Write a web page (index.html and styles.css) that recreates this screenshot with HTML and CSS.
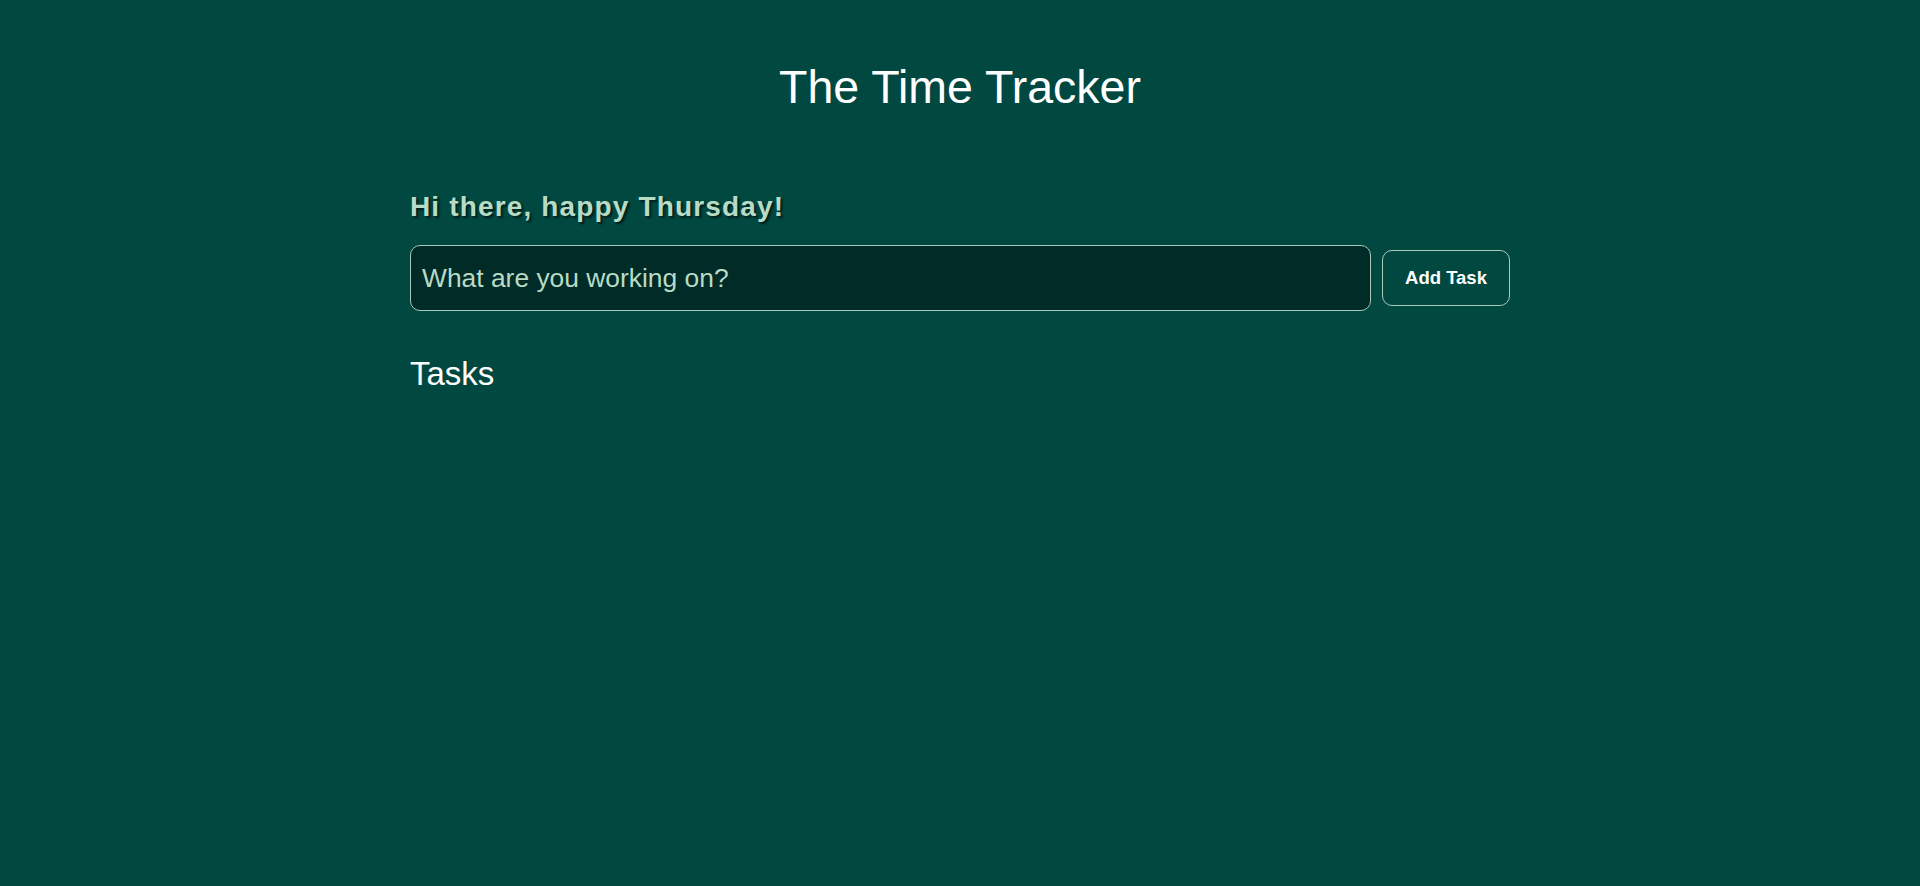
FILE: index.html
```html
<!DOCTYPE html>
<html lang="en">
<head>
<meta charset="utf-8">
<title>The Time Tracker</title>
<link rel="stylesheet" href="styles.css">
</head>
<body>
  <main class="app">
    <h1 class="title">The Time Tracker</h1>
    <section class="content">
      <h2 class="greeting">Hi there, happy Thursday!</h2>
      <form class="task-form" onsubmit="return false;">
        <input class="task-input" type="text" placeholder="What are you working on?">
        <button class="add-btn" type="submit">Add Task</button>
      </form>
      <h2 class="tasks-heading">Tasks</h2>
    </section>
  </main>
</body>
</html>
```

FILE: styles.css
```css
* { box-sizing: border-box; }

html, body {
  margin: 0;
  padding: 0;
  height: 100%;
}

body {
  background: #004840;
  font-family: "Liberation Sans", Arial, sans-serif;
  color: #ffffff;
}

.app {
  width: 1100px;
  margin: 0 auto;
  padding-top: 61px;
}

.title {
  margin: 0;
  font-size: 46.5px;
  line-height: 52px;
  font-weight: 400;
  text-align: center;
  color: #ffffff;
}

.content {
  padding-top: 77px;
}

.greeting {
  margin: 0 0 21px;
  font-size: 28px;
  line-height: 34px;
  font-weight: 700;
  letter-spacing: 1.15px;
  color: #b8dbc6;
  text-shadow: 2px 2px 2px #001f1a;
}

.task-form {
  display: flex;
  align-items: center;
  gap: 11px;
  margin: 0;
}

.task-input {
  flex: 1;
  height: 66px;
  padding: 0 11px;
  font-family: "Liberation Sans", Arial, sans-serif;
  font-size: 26.4px;
  color: #b8dbc6;
  background: #002b26;
  border: 1px solid #a9c9b9;
  border-radius: 10px;
  outline: none;
}

.task-input::placeholder {
  color: #b8dbc6;
  opacity: 1;
}

.add-btn {
  width: 128px;
  height: 56px;
  padding: 0;
  font-family: "Liberation Sans", Arial, sans-serif;
  font-size: 18.5px;
  font-weight: 700;
  color: #ffffff;
  background: transparent;
  border: 1px solid #a9c9b9;
  border-radius: 10px;
  cursor: pointer;
}

.tasks-heading {
  margin: 44px 0 0;
  font-size: 33px;
  line-height: 38px;
  font-weight: 400;
  color: #ffffff;
}
```
